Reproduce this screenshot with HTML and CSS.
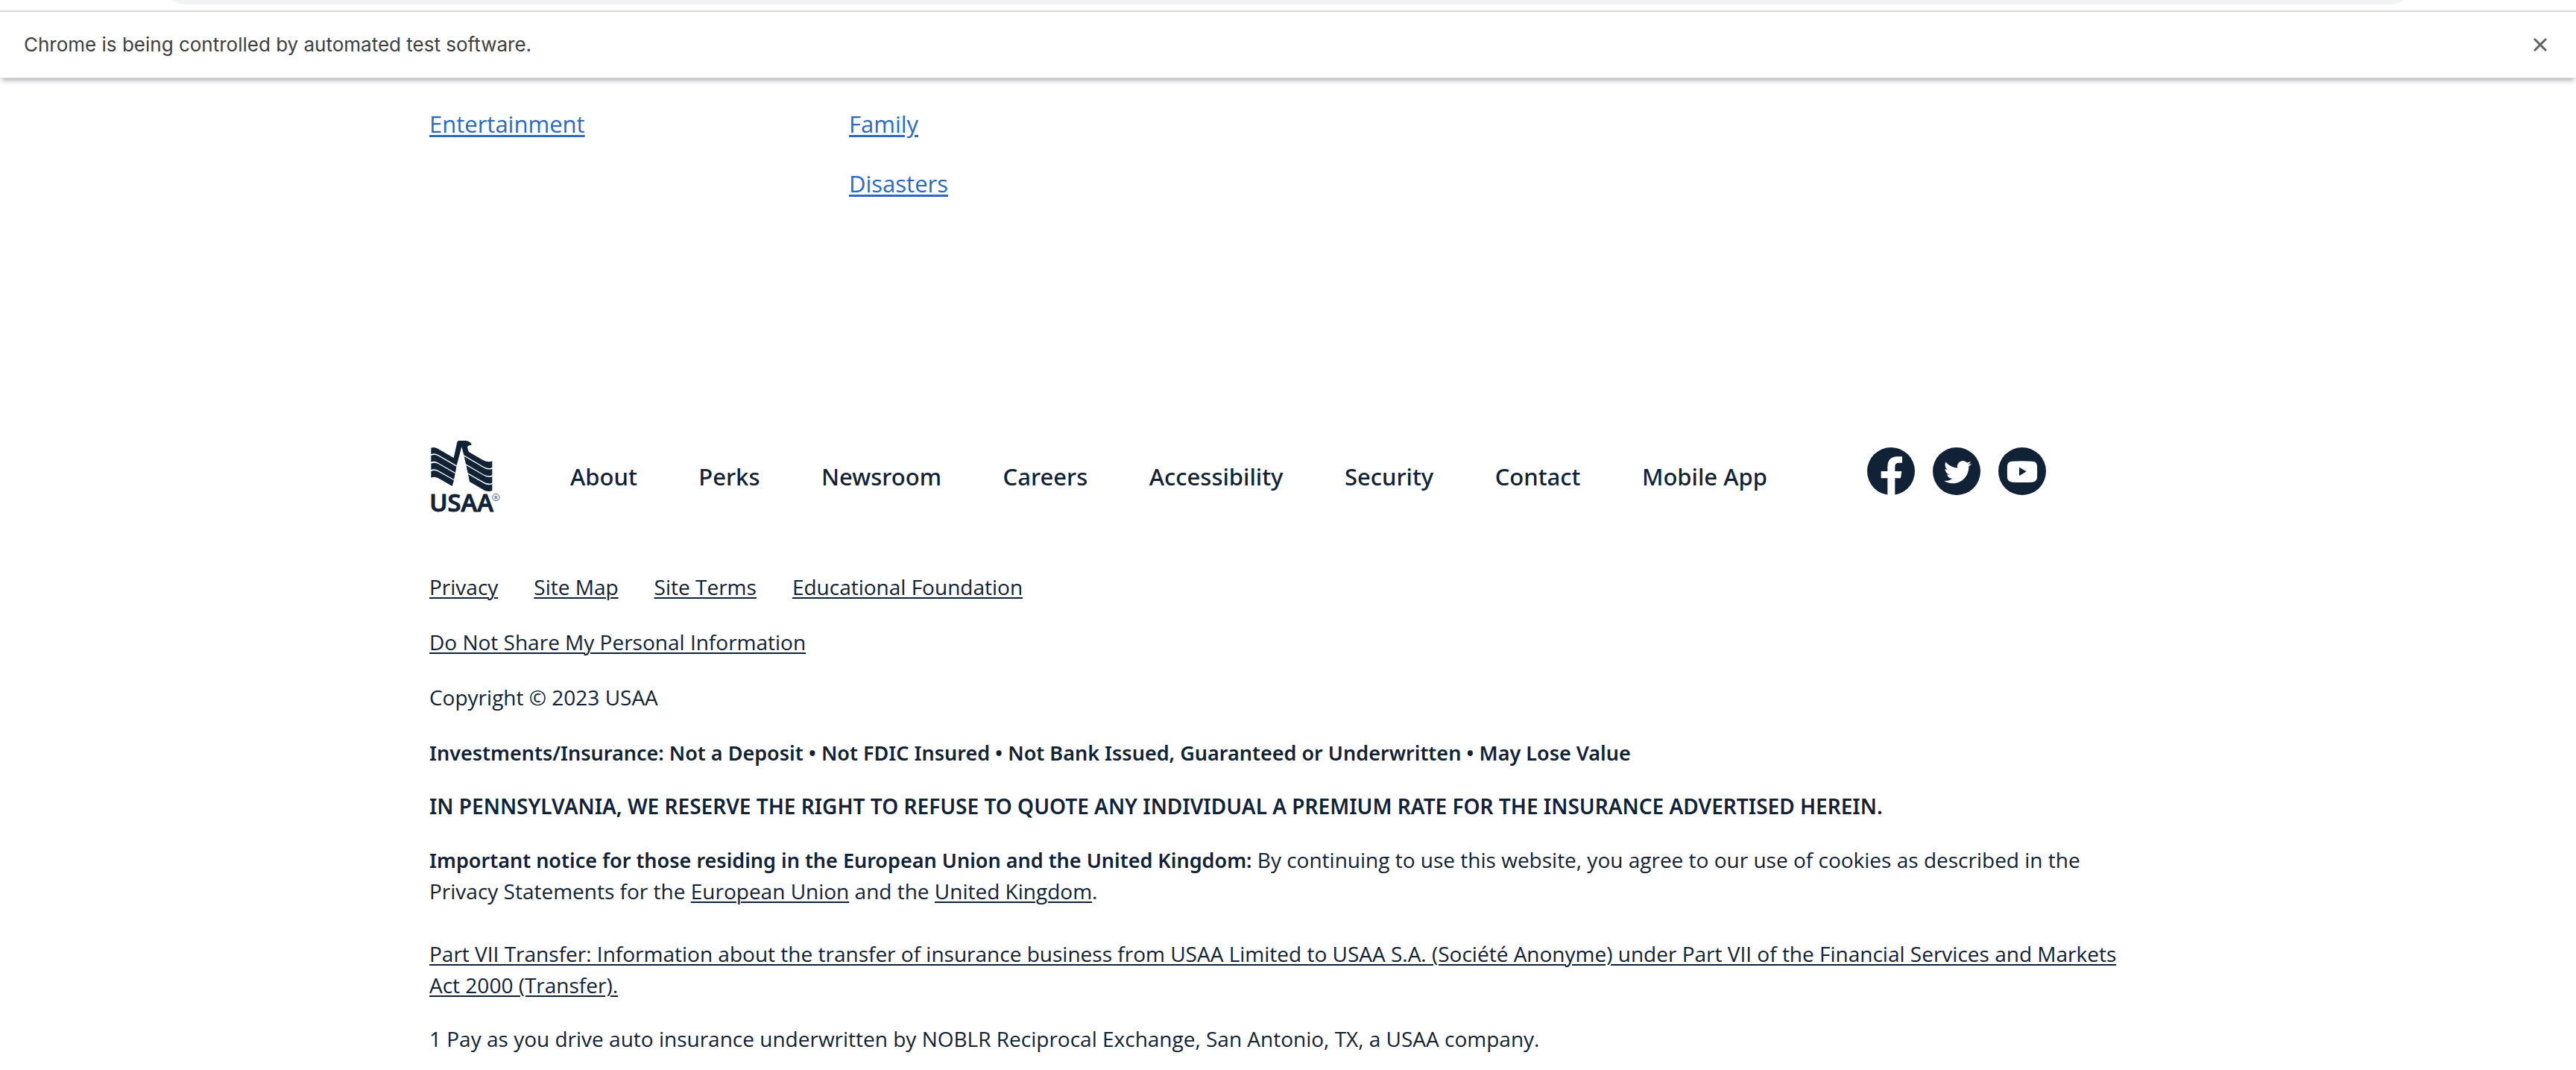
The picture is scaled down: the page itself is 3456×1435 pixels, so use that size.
FILE: index.html
```html
<!DOCTYPE html>
<html lang="en">
<head>
<meta charset="utf-8">
<title>USAA</title>
<link rel="stylesheet" href="styles.css">
</head>
<body>
<div class="toolbar"><div class="toolbar-pill"></div></div>
<div class="infobar" role="status">
  <span>Chrome is being controlled by automated test software.</span>
  <button class="infobar-close" type="button" aria-label="Close">
    <svg viewBox="0 0 18 18" width="18" height="18" aria-hidden="true"><path d="M1 1l16 16M17 1l-16 16" fill="none" stroke="currentColor" stroke-width="3"/></svg>
  </button>
</div>

<main class="wrap topics">
  <ul class="topic-list">
    <li><a href="#entertainment">Entertainment</a></li>
  </ul>
  <ul class="topic-list">
    <li><a href="#family">Family</a></li>
    <li><a href="#disasters">Disasters</a></li>
  </ul>
</main>

<footer class="wrap footer">
  <div class="footer-main">
    <a class="logo" href="#home" aria-label="USAA home">
      <svg viewBox="48 60 288 294" width="96" height="98" aria-hidden="true">
        <path d="M55 92Q69 87 82 95L146 132L160 69Q161 63 168 63H194Q217 66 218 81Q206 80 201 88Q203 103 208 109L262 140Q284 152 301 145V171Q285 178 266 167L187 121L178 88L158 163L84 120Q68 111 55 118Z"/>
        <path d="M55 123Q71 116 85 125L157 167L153 192L84 152Q69 143 55 149Z"/>
        <path d="M55 155Q71 148 85 157L152 196L147 219L84 183Q69 174 55 180Z"/>
        <path d="M55 186Q71 179 85 188L147 223L140 246L84 214Q69 205 55 212Z"/>
        <path d="M188 126L265 171Q284 183 301 176V202Q285 209 266 199L195 157Z"/>
        <path d="M196 162L265 202Q284 214 301 207V233Q285 240 266 229L203 193Z"/>
        <path d="M204 198L265 233Q284 245 301 238V264Q288 271 270 263L210 228Z"/>
        <text class="logo-word" x="49" y="348">USAA</text>
        <circle cx="316" cy="291" r="14" fill="none" stroke="currentColor" stroke-width="2"/>
        <text class="logo-mark" x="309" y="299">R</text>
      </svg>
    </a>
    <nav class="footer-nav" aria-label="Footer">
      <a href="#about">About</a>
      <a href="#perks">Perks</a>
      <a href="#newsroom">Newsroom</a>
      <a href="#careers">Careers</a>
      <a href="#accessibility">Accessibility</a>
      <a href="#security">Security</a>
      <a href="#contact">Contact</a>
      <a href="#mobile">Mobile App</a>
    </nav>
    <div class="social">
      <a href="#facebook" aria-label="Facebook">
        <svg viewBox="0 0 192 192" width="64" height="64" aria-hidden="true"><circle cx="96" cy="96" r="96"/><path fill="#fff" d="M82 192V124H56V96H82V76Q82 37 121 37H141V62H128Q112 62 112 77V96H139L135 124H112V192Z"/></svg>
      </a>
      <a href="#twitter" aria-label="Twitter">
        <svg viewBox="0 0 192 192" width="64" height="64" aria-hidden="true"><circle cx="96" cy="96" r="96"/><path fill="#fff" transform="translate(45 44) scale(4.63)" d="M23.953 4.570a10 10 0 01-2.825.775 4.958 4.958 0 002.163-2.723c-.951.555-2.005.959-3.127 1.184a4.920 4.920 0 00-8.384 4.482C7.690 8.095 4.067 6.130 1.640 3.162a4.822 4.822 0 00-.666 2.475c0 1.710.870 3.213 2.188 4.096a4.904 4.904 0 01-2.228-.616v.060a4.923 4.923 0 003.946 4.827 4.996 4.996 0 01-2.212.085 4.936 4.936 0 004.604 3.417 9.867 9.867 0 01-6.102 2.105c-.390 0-.779-.023-1.170-.067a13.995 13.995 0 007.557 2.209c9.053 0 13.998-7.496 13.998-13.985 0-.210 0-.420-.015-.630A9.935 9.935 0 0024 4.590z"/></svg>
      </a>
      <a href="#youtube" aria-label="YouTube">
        <svg viewBox="0 0 192 192" width="64" height="64" aria-hidden="true"><circle cx="96" cy="96" r="96"/><path fill="#fff" d="M56 56Q96 54 136 56Q155 56 156 74Q157 97 156 121Q155 139 136 140Q96 142 56 140Q37 139 36 121Q35 97 36 74Q37 56 56 56Z"/><path d="M84 80L113 97L84 115Z"/></svg>
      </a>
    </div>
  </div>

  <div class="legal">
    <ul class="legal-links">
      <li><a href="#privacy">Privacy</a></li>
      <li><a href="#sitemap">Site Map</a></li>
      <li><a href="#terms">Site Terms</a></li>
      <li><a href="#foundation">Educational Foundation</a></li>
    </ul>
    <p class="spaced"><a href="#do-not-share">Do Not Share My Personal Information</a></p>
    <p class="spaced">Copyright © 2023 USAA</p>
    <p class="spaced"><strong>Investments/Insurance: Not a Deposit • Not FDIC Insured • Not Bank Issued, Guaranteed or Underwritten • May Lose Value</strong></p>
    <p class="state-notice">IN PENNSYLVANIA, WE RESERVE THE RIGHT TO REFUSE TO QUOTE ANY INDIVIDUAL A PREMIUM RATE FOR THE INSURANCE ADVERTISED HEREIN.</p>
    <p><strong>Important notice for those residing in the European Union and the United Kingdom:</strong> By continuing to use this website, you agree to our use of cookies as described in the Privacy Statements for the <a href="#eu">European Union</a> and the <a href="#uk">United Kingdom</a>.</p>
    <p class="transfer"><a href="#transfer">Part VII Transfer: Information about the transfer of insurance business from USAA Limited to USAA S.A. (Société Anonyme) under Part VII of the Financial Services and Markets Act 2000 (Transfer).</a></p>
    <p>1 Pay as you drive auto insurance underwritten by NOBLR Reciprocal Exchange, San Antonio, TX, a USAA company.</p>
  </div>
</footer>
</body>
</html>
```
FILE: styles.css
```css
* {
  box-sizing: border-box;
}

body {
  margin: 0;
  background: #fff;
  color: #112236;
  font: 28px/42px "Open Sans", "Noto Sans", sans-serif;
}

ul, p {
  margin: 0;
  padding: 0;
  list-style: none;
}

a {
  color: inherit;
  text-decoration-thickness: 2px;
  text-underline-offset: 3px;
}

svg {
  display: block;
  overflow: visible;
  fill: currentColor;
}

/* Browser chrome */
.toolbar {
  height: 14px;
  overflow: hidden;
}

.toolbar-pill {
  height: 56px;
  margin: -50px 220px 0 219px;
  border-radius: 28px;
  background: #f1f3f4;
}

.infobar {
  display: flex;
  align-items: center;
  justify-content: space-between;
  height: 91px;
  padding: 0 32px;
  border-top: 2px solid #dadada;
  border-bottom: 1px solid #dadada;
  box-shadow: 0 6px 6px -3px rgba(60, 64, 67, 0.4);
  color: #3c4043;
  font: 26px/32px Inter, sans-serif;
}

.infobar-close {
  padding: 7px;
  border: 0;
  background: none;
  color: #5f6368;
}

/* Page columns */
.wrap {
  padding-right: calc(100% / 6);
  padding-left: calc(100% / 6);
}

.topics {
  display: grid;
  grid-template-columns: repeat(4, 563fr) 52fr;
  padding-top: 37px;
}

.topic-list {
  display: flex;
  flex-direction: column;
  gap: 32px;
  color: #2b69c3;
  font-size: 31px;
  line-height: 48px;
}

.topic-list a {
  text-decoration-thickness: 3px;
}

/* Footer */
.footer {
  padding-top: 320px;
  padding-bottom: 21px;
}

.footer-main {
  display: flex;
  align-items: center;
}

.logo-word {
  font-size: 98px;
  font-weight: 600;
  stroke: currentColor;
  stroke-width: 3px;
}

.logo-mark {
  font-size: 22px;
}

.footer-nav {
  display: flex;
  flex: 0 1 1606px;
  justify-content: space-between;
  margin-left: 93px;
  font-family: "Noto Sans", sans-serif;
  font-size: 31px;
  font-weight: 500;
  line-height: 48px;
}

.footer-nav a {
  text-decoration: none;
  white-space: nowrap;
}

.social {
  display: flex;
  gap: 24px;
  margin: 0 0 14px 134px;
}

.legal {
  display: flex;
  flex-direction: column;
  gap: 30px;
  max-width: 2280px;
  padding-top: 78px;
}

.legal-links {
  display: flex;
  flex-wrap: wrap;
  gap: 0 48px;
}

.legal strong {
  font-family: "Noto Sans", sans-serif;
  font-size: 27px;
  font-weight: 600;
  line-height: 27px;
}

.spaced {
  padding-top: 2px;
}

.state-notice {
  font-family: "Noto Sans", sans-serif;
  font-weight: 600;
}

.transfer {
  padding-top: 12px;
}
```
